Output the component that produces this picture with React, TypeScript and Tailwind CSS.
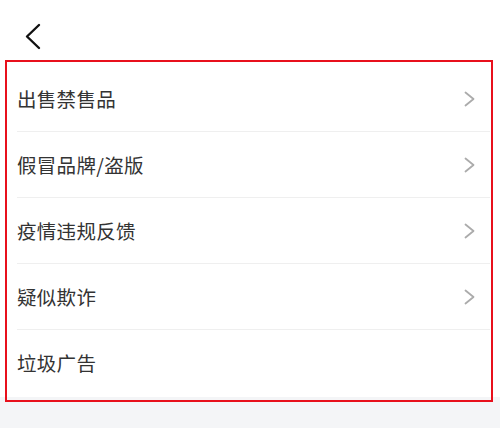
const items = [
  { label: '出售禁售品', arrow: true },
  { label: '假冒品牌/盗版', arrow: true },
  { label: '疫情违规反馈', arrow: true },
  { label: '疑似欺诈', arrow: true },
  { label: '垃圾广告', arrow: false },
]

const App = () => {
  return (
    <div
      className="relative w-[500px] h-[428px] bg-[#f4f5f7] overflow-hidden"
      style={{ fontFamily: '"Noto Sans CJK SC", "Noto Sans", sans-serif' }}
    >
      <div className="bg-white">
        <div className="h-[66px] pl-[25px] pt-[23px]">
          <svg width="16" height="27" viewBox="0 0 16 27" fill="none">
            <polyline
              points="14,2 2,13.5 14,25"
              stroke="#111"
              strokeWidth="2.4"
              strokeLinecap="round"
              strokeLinejoin="round"
            />
          </svg>
        </div>
        <ul className="pb-[1px]">
          {items.map((item, i) => (
            <li key={item.label} className="pl-[17px] pr-[10px]">
              <div
                className={`h-[66px] flex items-center justify-between pr-[15px] ${
                  i < items.length - 1 ? 'border-b border-[#efefef]' : ''
                }`}
              >
                <span className="text-[19.5px] text-[#333333] tracking-[0.3px]">{item.label}</span>
                {item.arrow && (
                  <svg width="11" height="16" viewBox="0 0 11 16" fill="none">
                    <polyline
                      points="1.5,1.5 9.5,8 1.5,14.5"
                      stroke="#ababab"
                      strokeWidth="1.8"
                      strokeLinecap="round"
                      strokeLinejoin="round"
                    />
                  </svg>
                )}
              </div>
            </li>
          ))}
        </ul>
      </div>
      {/* red highlight annotation */}
      <div className="absolute left-[5px] top-[60px] w-[488px] h-[342px] border-[2.5px] border-[#e8101c] pointer-events-none" />
    </div>
  )
}

export default App
